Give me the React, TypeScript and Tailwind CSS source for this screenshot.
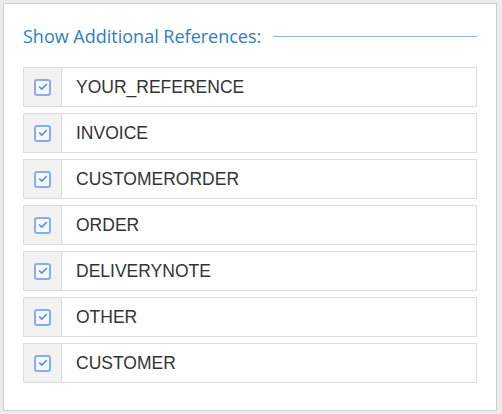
import { Check } from "lucide-react";

const REFS = [
  "YOUR_REFERENCE",
  "INVOICE",
  "CUSTOMERORDER",
  "ORDER",
  "DELIVERYNOTE",
  "OTHER",
  "CUSTOMER",
];

function RefRow({ label }: { label: string }) {
  return (
    <div className="flex h-[40px] border border-[#dcdcdc] bg-white">
      <div className="flex w-[38px] shrink-0 items-center justify-center border-r border-[#dcdcdc] bg-[#f2f2f2]">
        <span className="flex h-[17px] w-[17px] items-center justify-center rounded-[3px] border-2 border-[#86adf2] bg-[#f5f8fe]">
          <Check className="h-[10px] w-[10px] text-[#5590ec]" strokeWidth={4} />
        </span>
      </div>
      <div className="flex flex-1 items-center pl-[14px] font-['Liberation_Sans'] text-[17.5px] text-[#333]">
        {label}
      </div>
    </div>
  );
}

export default function App() {
  return (
    <div className="h-[414px] w-[502px] bg-[#ececec] p-[3px]">
      <div className="h-[408px] w-[494px] border border-[#cfcfcf] bg-white px-[19px] pt-[20px]">
        <div className="flex items-center gap-[12px]">
          <h3 className="font-['Open_Sans'] text-[18px] leading-[24px] text-[#2a7fc6]">
            Show Additional References:
          </h3>
          <div className="h-px flex-1 bg-[#88b6e0]" />
        </div>
        <div className="mt-[19px] flex flex-col gap-[6px]">
          {REFS.map((r) => (
            <RefRow key={r} label={r} />
          ))}
        </div>
      </div>
    </div>
  );
}
